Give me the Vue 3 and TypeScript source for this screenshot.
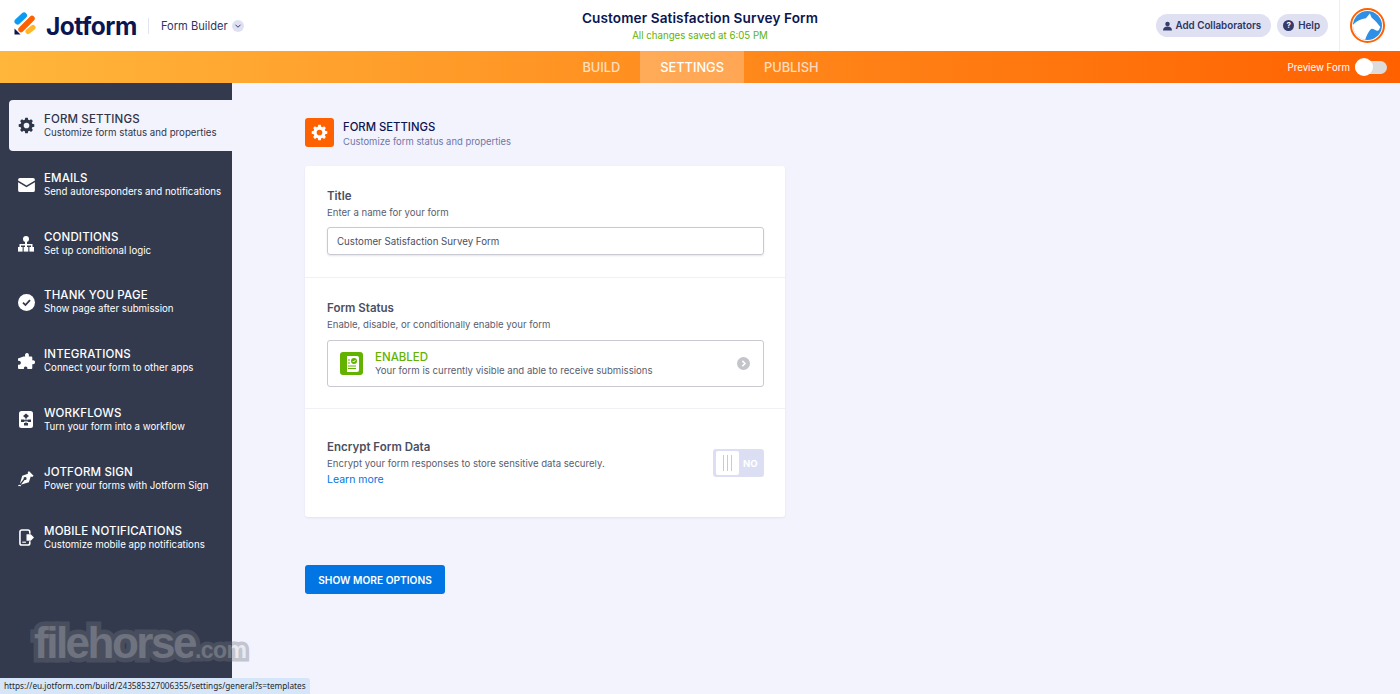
<script setup lang="ts">
interface NavItem {
  title: string
  desc: string
  icon: string
}

const navItems: NavItem[] = [
  { title: 'FORM SETTINGS', desc: 'Customize form status and properties', icon: 'gear' },
  { title: 'EMAILS', desc: 'Send autoresponders and notifications', icon: 'mail' },
  { title: 'CONDITIONS', desc: 'Set up conditional logic', icon: 'tree' },
  { title: 'THANK YOU PAGE', desc: 'Show page after submission', icon: 'check' },
  { title: 'INTEGRATIONS', desc: 'Connect your form to other apps', icon: 'puzzle' },
  { title: 'WORKFLOWS', desc: 'Turn your form into a workflow', icon: 'flow' },
  { title: 'JOTFORM SIGN', desc: 'Power your forms with Jotform Sign', icon: 'pen' },
  { title: 'MOBILE NOTIFICATIONS', desc: 'Customize mobile app notifications', icon: 'phone' },
]

const gearPath =
  'M10.2 1h3.6l.6 2.9 1.6.7 2.5-1.6 2.5 2.5-1.6 2.5.7 1.6 2.9.6v3.6l-2.9.6-.7 1.6 1.6 2.5-2.5 2.5-2.5-1.6-1.6.7-.6 2.9h-3.6l-.6-2.9-1.6-.7L5.5 21l-2.5-2.5 1.6-2.5-.7-1.6-2.9-.6v-3.6l2.9-.6.7-1.6L3 5.5 5.5 3 8 4.6l1.6-.7zM12 8a4 4 0 1 0 0 8 4 4 0 0 0 0-8z'
</script>

<template>
  <div class="page">
    <header class="topbar">
      <div class="brand">
        <svg class="logo" viewBox="14 11.5 23 23" width="23" height="23">
          <path d="M17.5 21 24 15" stroke="#0a9cf5" stroke-width="6" stroke-linecap="round" />
          <path d="M21 29 32 18" stroke="#ff6100" stroke-width="5.5" stroke-linecap="round" />
          <path d="M28 31 33 27" stroke="#ffb629" stroke-width="5" stroke-linecap="round" />
          <path d="M14.5 28v6h6z" fill="#0a1551" />
        </svg>
        <span class="wordmark">Jotform</span>
        <span class="brand-sep"></span>
        <span class="builder">Form Builder</span>
        <span class="chev">
          <svg viewBox="0 0 12 12" width="10" height="10">
            <path d="M3 4.5 6 7.5 9 4.5" fill="none" stroke="#343c6a" stroke-width="1.2" />
          </svg>
        </span>
      </div>

      <div class="form-title">
        <div class="name">Customer Satisfaction Survey Form</div>
        <div class="saved">All changes saved at 6:05 PM</div>
      </div>

      <div class="actions">
        <button class="pill">
          <svg viewBox="0 0 12 12" width="9" height="10">
            <circle cx="6" cy="3.2" r="3" fill="#343c6a" />
            <path d="M0 12c0-3.8 2.4-5.500 6-5.500s6 1.700 6 5.500z" fill="#343c6a" />
          </svg>
          Add Collaborators
        </button>
        <button class="pill help">
          <span class="q">?</span>
          Help
        </button>
        <div class="avatar-wrap">
          <div class="avatar">
            <svg viewBox="0 0 36 36" width="29" height="29">
              <defs>
                <clipPath id="avatar-disc"><circle cx="18" cy="18" r="18" /></clipPath>
              </defs>
              <g clip-path="url(#avatar-disc)">
                <rect width="36" height="36" fill="#2f8fe6" />
                <path d="M0 17C5 12 10 10 16 9l5-6 2 5c5 4 8 8 11 12l-2 4c-3 2-5-2-9-2-3 2-6 8-8 14H0z" fill="#fff" />
              </g>
            </svg>
          </div>
        </div>
      </div>
    </header>

    <nav class="tabs">
      <div class="tab-list">
        <span class="tab">BUILD</span>
        <span class="tab active">SETTINGS</span>
        <span class="tab">PUBLISH</span>
      </div>
      <div class="preview">
        <span>Preview Form</span>
        <span class="mini-toggle"><i></i></span>
      </div>
    </nav>

    <div class="body">
      <aside class="sidebar">
        <div
          v-for="(item, i) in navItems"
          :key="item.title"
          class="nav-item"
          :class="{ current: i === 0 }"
        >
          <span class="nav-icon">
            <svg v-if="item.icon === 'gear'" viewBox="0 0 24 24" width="17" height="17">
              <path :d="gearPath" fill="#2f3648" fill-rule="evenodd" />
            </svg>
            <svg v-else-if="item.icon === 'mail'" viewBox="0 0 18 15" width="17" height="14">
              <path d="M2 0h14a2 2 0 0 1 2 2v.6L9 8 0 2.600V2a2 2 0 0 1 2-2z" fill="#fff" />
              <path d="M0 4.600 9 10l9-5.400V13a2 2 0 0 1-2 2H2a2 2 0 0 1-2-2z" fill="#fff" />
            </svg>
            <svg v-else-if="item.icon === 'tree'" viewBox="0 0 16 16" width="16" height="16">
              <circle cx="8" cy="3" r="3" fill="#fff" />
              <path d="M7 5h2v3h5.500v3H13V9.500H9V11H7V9.500H3V11H1.500V8H7z" fill="#fff" />
              <rect x="0" y="11" width="4.600" height="4.600" fill="#fff" />
              <rect x="5.700" y="11" width="4.600" height="4.600" fill="#fff" />
              <rect x="11.400" y="11" width="4.600" height="4.600" fill="#fff" />
            </svg>
            <svg v-else-if="item.icon === 'check'" viewBox="0 0 16 16" width="17" height="17">
              <circle cx="8" cy="8" r="8" fill="#fff" />
              <path d="M4.700 8.200 7 10.400l4.300-4.600" fill="none" stroke="#333a4d" stroke-width="1.700" />
            </svg>
            <svg v-else-if="item.icon === 'puzzle'" viewBox="0 0 18 17" width="18" height="17">
              <path d="M6.500 3.500h1.700C7.600 1.500 8.500 0 10 0s2.300 1.500 1.800 3.500h2.500a1 1 0 0 1 1 1v3c1.500-.6 2.700.2 2.700 1.700s-1.200 2.400-2.700 1.800v4a1 1 0 0 1-1 1h-4c.5-1.600-.4-2.600-1.700-2.600S6.500 14.400 7 16H2a1 1 0 0 1-1-1v-3.300c-.300-.3 2 .7 2.800-1.200C4.300 8.700 2.500 7.400 1 8V5.500z" fill="#fff" />
            </svg>
            <svg v-else-if="item.icon === 'flow'" viewBox="0 0 14 17" width="14" height="17">
              <rect width="14" height="17" rx="2.500" fill="#fff" />
              <path d="M7 2.500 10 5 7 7.500 4 5zM2 8.500h3.500V11H2zM8.500 8.500H12V11H8.500zM5 12h4v2.500H5z" fill="#333a4d" />
              <path d="M6.600 7h.8v5h-.8zM5 9.300h4v.8H5z" fill="#333a4d" />
            </svg>
            <svg v-else-if="item.icon === 'pen'" viewBox="0 0 18 18" width="17" height="17">
              <path d="M11.500 1 16.500 6 15 7.500 13.500 7l-2 6L3 15.500l4-5a1.600 1.600 0 1 0-1-1l-4 5L4.500 6l6-2-.2-1.200z" fill="#fff" />
              <path d="M.5 17c1-1.500 1.500 0 2.500-.5" fill="none" stroke="#fff" stroke-width="1.200" />
            </svg>
            <svg v-else viewBox="0 0 16 18" width="15" height="17">
              <path d="M11.500 5V3a2 2 0 0 0-2-2H3a2 2 0 0 0-2 2v12a2 2 0 0 0 2 2h6.500a2 2 0 0 0 2-2v-2" fill="none" stroke="#fff" stroke-width="1.700" />
              <path d="M3.500 14h4" stroke="#fff" stroke-width="1.200" />
              <path d="M8 5.500h4.500L16 9l-3.500 3.500H8z" fill="#fff" />
            </svg>
          </span>
          <span class="nav-text">
            <span class="nav-title">{{ item.title }}</span>
            <span class="nav-desc">{{ item.desc }}</span>
          </span>
        </div>
      </aside>

      <main class="content">
        <div class="section-head">
          <span class="head-icon">
            <svg viewBox="0 0 24 24" width="17" height="17">
              <path :d="gearPath" fill="#fff" fill-rule="evenodd" />
            </svg>
          </span>
          <div>
            <div class="head-title">FORM SETTINGS</div>
            <div class="head-sub">Customize form status and properties</div>
          </div>
        </div>

        <section class="card">
          <div class="row row-title">
            <div class="label">Title</div>
            <div class="hint">Enter a name for your form</div>
            <div class="input">Customer Satisfaction Survey Form</div>
          </div>

          <div class="row row-status">
            <div class="label">Form Status</div>
            <div class="hint">Enable, disable, or conditionally enable your form</div>
            <div class="status-box">
              <span class="status-icon">
                <svg viewBox="0 0 14 16" width="14" height="16">
                  <path d="M2 0h10a2 2 0 0 1 2 2v12a2 2 0 0 1-2 2H2z" fill="#fff" />
                  <circle cx="9" cy="5" r="3" fill="#64b200" />
                  <path d="M7.700 5 8.700 6l1.700-1.900" fill="none" stroke="#fff" stroke-width="1" />
                  <path d="M3 4h2M3 7h2M3 10h8M3 12.500h8" stroke="#64b200" stroke-width="1.200" />
                </svg>
              </span>
              <div class="status-text">
                <div class="enabled">ENABLED</div>
                <div class="status-desc">Your form is currently visible and able to receive submissions</div>
              </div>
              <span class="status-arrow">
                <svg viewBox="0 0 12 12" width="9" height="9">
                  <path d="M4.500 2.500 8 6l-3.500 3.500" fill="none" stroke="#fff" stroke-width="2" />
                </svg>
              </span>
            </div>
          </div>

          <div class="row row-encrypt">
            <div class="encrypt-text">
              <div class="label">Encrypt Form Data</div>
              <div class="hint">Encrypt your form responses to store sensitive data securely.</div>
              <a class="learn">Learn more</a>
            </div>
            <div class="big-toggle">
              <span class="knob"><i></i><i></i><i></i></span>
              <span class="no">NO</span>
            </div>
          </div>
        </section>

        <button class="more">SHOW MORE OPTIONS</button>
      </main>
    </div>

    <div class="watermark">filehorse<small>.com</small></div>
    <div class="status-url">https://eu.jotform.com/build/243585327006355/settings/general?s=templates</div>
  </div>
</template>

<style>
html,
body {
  margin: 0;
  background: #f3f3fe;
}
</style>

<style scoped>
.page {
  position: relative;
  display: flex;
  flex-direction: column;
  height: 694px;
  overflow: hidden;
  font-family: Inter, "Noto Sans", sans-serif;
  color: #0a1551;
  background: #f3f3fe;
}

.topbar {
  display: flex;
  align-items: center;
  justify-content: space-between;
  height: 51px;
  background: #fff;
  position: relative;
}

.brand {
  display: flex;
  align-items: center;
  padding-left: 14px;
  width: 500px;
}

.logo {
  margin-right: 9px;
  margin-bottom: 5px;
}

.wordmark {
  font-size: 24.500px;
  font-weight: 700;
  letter-spacing: -0.5px;
  color: #0a1551;
  width: 91px;
}

.brand-sep {
  width: 1px;
  height: 16px;
  background: #dfe3f2;
  margin: 0 12px 0 11px;
}

.builder {
  font-size: 11.100px;
  color: #2e3563;
}

.chev {
  display: flex;
  align-items: center;
  justify-content: center;
  width: 12px;
  height: 12px;
  margin-left: 4px;
  border-radius: 50%;
  background: #dfe1f3;
}

.form-title {
  text-align: center;
  position: absolute;
  left: 0;
  right: 0;
  top: 9px;
}

.name {
  font-size: 13.600px;
  font-weight: 600;
  line-height: 18px;
  letter-spacing: 0.1px;
}

.saved {
  font-size: 9.700px;
  line-height: 14px;
  margin-top: 2px;
  color: #64b200;
}

.actions {
  display: flex;
  align-items: center;
  position: relative;
  z-index: 1;
  height: 51px;
}

.pill {
  display: flex;
  align-items: center;
  gap: 4px;
  height: 23px;
  padding: 0 10px 0 7px;
  margin-right: 6px;
  border: 0;
  border-radius: 12px;
  background: #dfe1f3;
  color: #2e3563;
  font-family: inherit;
  font-size: 9.800px;
  font-weight: 600;
}

.pill.help {
  padding: 0 8px 0 6px;
  margin-right: 0;
}

.q {
  width: 11px;
  height: 11px;
  border-radius: 50%;
  background: #343c6a;
  color: #fff;
  font-size: 8px;
  line-height: 11px;
  text-align: center;
  font-weight: 700;
}

.avatar-wrap {
  display: flex;
  align-items: center;
  justify-content: center;
  width: 61px;
  height: 51px;
  margin-left: 11px;
  padding-right: 5px;
  border-left: 1px solid #eeeff5;
  box-sizing: border-box;
}

.avatar {
  width: 29px;
  height: 29px;
  margin-bottom: 1px;
  padding: 1px;
  border: 2px solid #ff6100;
  border-radius: 50%;
  display: flex;
  background: #fff;
}

.tabs {
  display: flex;
  align-items: center;
  justify-content: center;
  position: relative;
  height: 32px;
  background: linear-gradient(90deg, #ffb63b 0%, #ff6100 100%);
}

.tab-list {
  display: flex;
  height: 32px;
  margin-left: 1px;
}

.tab {
  display: flex;
  align-items: center;
  padding: 0 20px;
  font-size: 12.800px;
  font-weight: 500;
  color: rgba(255, 255, 255, 0.72);
}

.tab.active {
  color: #fff;
  background: rgba(255, 255, 255, 0.25);
}

.preview {
  position: absolute;
  right: 13px;
  top: 0;
  height: 32px;
  display: flex;
  align-items: center;
  gap: 5px;
  color: #fff;
  font-size: 9.700px;
}

.mini-toggle {
  position: relative;
  display: block;
  width: 32px;
  height: 13px;
  border-radius: 7px;
  background: #dcdcdc;
}

.mini-toggle i {
  position: absolute;
  left: 0;
  top: -3px;
  width: 18px;
  height: 18px;
  border-radius: 50%;
  background: #fff;
}

.body {
  display: flex;
  flex: 1;
  min-height: 0;
}

.sidebar {
  width: 232px;
  padding: 17.450px 0 0 9px;
  box-sizing: border-box;
  background: #333a4d;
  flex-shrink: 0;
}

.nav-item {
  display: flex;
  align-items: center;
  height: 51px;
  margin-bottom: 7.800px;
  padding-left: 8px;
  color: #fff;
  border-radius: 4px 0 0 4px;
}

.nav-item.current {
  background: #f3f3fe;
  color: #2f3648;
}

.nav-icon {
  display: flex;
  align-items: center;
  justify-content: center;
  width: 18px;
  margin-right: 9px;
}

.nav-text {
  display: flex;
  flex-direction: column;
}

.nav-title {
  font-size: 11.500px;
  font-weight: 500;
  line-height: 14px;
  letter-spacing: 0.15px;
}

.nav-desc {
  font-size: 9.700px;
  line-height: 14px;
  white-space: nowrap;
}

.content {
  padding: 35px 0 0 73px;
  width: 480px;
  box-sizing: content-box;
}

.section-head {
  display: flex;
  align-items: center;
  height: 29px;
  gap: 9px;
  margin-bottom: 19px;
}

.head-icon {
  display: flex;
  align-items: center;
  justify-content: center;
  width: 29px;
  height: 29px;
  border-radius: 3px;
  background: #ff6100;
}

.head-title {
  font-size: 11.300px;
  font-weight: 500;
  line-height: 18px;
}

.head-sub {
  font-size: 9.450px;
  line-height: 12px;
  color: #6f76a7;
}

.card {
  background: #fff;
  border-radius: 3px;
  box-shadow: 0 1px 2px rgba(30, 40, 90, 0.08);
}

.row {
  box-sizing: border-box;
  padding: 0 21px 0 22px;
  border-bottom: 1px solid #f0f0f5;
}

.row-title {
  height: 112px;
  padding-top: 23px;
}

.row-status {
  height: 131px;
  padding-top: 23px;
}

.row-encrypt {
  height: 108px;
  padding-top: 31px;
  border-bottom: 0;
  display: flex;
  justify-content: space-between;
}

.label {
  font-size: 11.500px;
  font-weight: 600;
  line-height: 14px;
  color: #4b4f5f;
}

.hint {
  font-size: 9.600px;
  line-height: 14px;
  margin-top: 3px;
  color: #595d6e;
}

.input {
  box-sizing: border-box;
  height: 28px;
  margin-top: 7px;
  padding-left: 9px;
  border: 1px solid #c8c9d1;
  border-radius: 3px;
  box-shadow: 0 1px 2px rgba(30, 40, 90, 0.12);
  font-size: 9.720px;
  line-height: 27px;
  color: #4b4f5f;
}

.status-box {
  display: flex;
  align-items: center;
  box-sizing: border-box;
  height: 47px;
  margin-top: 8px;
  padding: 0 13px 0 12px;
  border: 1px solid #c8c9d1;
  border-radius: 3px;
}

.status-icon {
  display: flex;
  align-items: center;
  justify-content: center;
  width: 23px;
  height: 23px;
  margin-right: 12px;
  border-radius: 3px;
  background: #64b200;
}

.status-text {
  flex: 1;
}

.enabled {
  font-size: 11.500px;
  font-weight: 500;
  line-height: 14px;
  color: #64b200;
}

.status-desc {
  font-size: 9.600px;
  line-height: 14px;
  color: #595d6e;
}

.status-arrow {
  display: flex;
  align-items: center;
  justify-content: center;
  width: 13px;
  height: 13px;
  border-radius: 50%;
  background: #c4c5cb;
}

.encrypt-text {
  width: 340px;
}

.learn {
  display: block;
  margin-top: 2px;
  font-size: 10.500px;
  line-height: 14px;
  color: #0075e3;
}

.big-toggle {
  display: flex;
  align-items: center;
  box-sizing: border-box;
  width: 51px;
  height: 28px;
  margin-top: 9px;
  padding: 2px 3px;
  border-radius: 3px;
  background: #dcdff4;
}

.knob {
  display: flex;
  align-items: center;
  justify-content: center;
  gap: 3px;
  width: 23px;
  height: 24px;
  border-radius: 2px;
  background: #fff;
}

.knob i {
  width: 1px;
  height: 16px;
  background: #c5c9e6;
}

.no {
  margin-left: 4px;
  color: #fff;
  font-size: 9.500px;
  font-weight: 700;
}

.more {
  display: block;
  width: 140px;
  height: 29px;
  margin-top: 48px;
  border: 0;
  border-radius: 3px;
  background: #0075e3;
  color: #fff;
  font-family: inherit;
  font-size: 10.200px;
  font-weight: 600;
}

/* halo and letters share one opacity so the halo stays flat where it overlaps */
.watermark {
  position: absolute;
  left: 34px;
  top: 618px;
  font-family: "Liberation Sans", Arial, sans-serif;
  font-size: 44px;
  font-weight: 700;
  line-height: 50px;
  letter-spacing: -2.500px;
  color: #d8d8d8;
  -webkit-text-stroke: 9px #6e737d;
  paint-order: stroke fill;
  stroke-linejoin: round;
  opacity: 0.36;
  pointer-events: none;
}

.watermark small {
  font-size: 23px;
  letter-spacing: -0.5px;
  -webkit-text-stroke-width: 7px;
}

.status-url {
  position: absolute;
  left: 0;
  bottom: 0;
  height: 16px;
  padding: 0 4px;
  border-top-right-radius: 3px;
  background: #d6e6f8;
  color: #23272e;
  font-family: "Noto Sans", "Open Sans", sans-serif;
  font-size: 8.240px;
  line-height: 16px;
}
</style>
